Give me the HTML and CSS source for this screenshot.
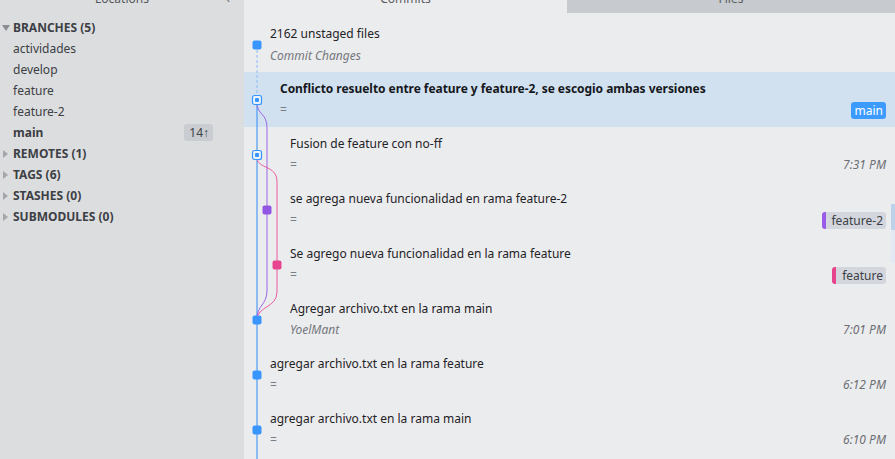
FILE: index.html
```html
<!DOCTYPE html>
<html>
<head>
<meta charset="utf-8">
<link rel="stylesheet" href="styles.css">
</head>
<body>
<aside class="sidebar">
  <div class="side-header"><span class="side-title">Locations</span><span class="side-chevron">‹</span></div>
  <ul class="tree">
    <li class="section open"><span class="tri tri-down"></span>BRANCHES (5)</li>
    <li class="item">actividades</li>
    <li class="item">develop</li>
    <li class="item">feature</li>
    <li class="item">feature-2</li>
    <li class="item current"><span>main</span><span class="ahead">14↑</span></li>
    <li class="section"><span class="tri tri-right"></span>REMOTES (1)</li>
    <li class="section"><span class="tri tri-right"></span>TAGS (6)</li>
    <li class="section"><span class="tri tri-right"></span>STASHES (0)</li>
    <li class="section"><span class="tri tri-right"></span>SUBMODULES (0)</li>
  </ul>
</aside>
<main class="main">
  <div class="tabs">
    <div class="tab active"><span>Commits</span></div>
    <div class="tab"><span>Files</span></div>
  </div>
  <div class="list">
    <svg class="graph" width="60" height="459" viewBox="0 0 60 459">
      <line x1="13" y1="45" x2="13" y2="100" stroke="#8dbcf3" stroke-width="1" stroke-dasharray="3 2"/>
      <line x1="13" y1="100" x2="13" y2="459" stroke="#3d94f6" stroke-width="1.1"/>
      <path d="M13 102 C13 116 23 112 23 128 L23 290 C23 306 13 304 13 320" fill="none" stroke="#9b66e6" stroke-width="1"/>
      <path d="M13 157 C13 170 33 164 33 182 L33 292 C33 308 13 306 13 320" fill="none" stroke="#ec5d9f" stroke-width="1"/>
      <rect x="8.5" y="40.5" width="9" height="9" rx="2" fill="#3a96ff"/>
      <rect x="8.5" y="95.5" width="9" height="9" rx="2" fill="#eaf2fb" stroke="#3a96ff" stroke-width="1.2"/>
      <rect x="11" y="98" width="4" height="4" rx="1" fill="#3a96ff"/>
      <rect x="8.5" y="150.5" width="9" height="9" rx="2" fill="#eaf2fb" stroke="#3a96ff" stroke-width="1.2"/>
      <rect x="11" y="153" width="4" height="4" rx="1" fill="#3a96ff"/>
      <rect x="18.5" y="205.5" width="9" height="9" rx="2" fill="#9157e4"/>
      <rect x="28.5" y="260.5" width="9" height="9" rx="2" fill="#e84590"/>
      <rect x="8.5" y="315.5" width="9" height="9" rx="2" fill="#3a96ff"/>
      <rect x="8.5" y="370.5" width="9" height="9" rx="2" fill="#3a96ff"/>
      <rect x="8.5" y="425.5" width="9" height="9" rx="2" fill="#3a96ff"/>
    </svg>
    <div class="row g1 first">
      <div class="title">2162 unstaged files</div>
      <div class="sub"><span class="meta">Commit Changes</span></div>
    </div>
    <div class="row g2 selected">
      <div class="title bold">Conflicto resuelto entre feature y feature-2, se escogio ambas versiones</div>
      <div class="sub"><span class="eq">=</span><span class="badge badge-main">main</span></div>
    </div>
    <div class="row g3">
      <div class="title">Fusion de feature con no-ff</div>
      <div class="sub"><span class="eq">=</span><span class="time">7:31 PM</span></div>
    </div>
    <div class="row g3">
      <div class="title">se agrega nueva funcionalidad en rama feature-2</div>
      <div class="sub"><span class="eq">=</span><span class="badge badge-purple">feature-2</span></div>
    </div>
    <div class="row g3">
      <div class="title">Se agrego nueva funcionalidad en la rama feature</div>
      <div class="sub"><span class="eq">=</span><span class="badge badge-pink">feature</span></div>
    </div>
    <div class="row g3">
      <div class="title">Agregar archivo.txt en la rama main</div>
      <div class="sub"><span class="meta">YoelMant</span><span class="time">7:01 PM</span></div>
    </div>
    <div class="row g1">
      <div class="title">agregar archivo.txt en la rama feature</div>
      <div class="sub"><span class="eq">=</span><span class="time">6:12 PM</span></div>
    </div>
    <div class="row g1">
      <div class="title">agregar archivo.txt en la rama main</div>
      <div class="sub"><span class="eq">=</span><span class="time">6:10 PM</span></div>
    </div>
    <div class="scroll-mark"><div class="mark-a"></div><div class="mark-b"></div></div>
  </div>
</main>
</body>
</html>
```

FILE: styles.css
```css
* { box-sizing: border-box; }
html, body { margin: 0; padding: 0; }
body {
  width: 895px;
  height: 459px;
  overflow: hidden;
  display: flex;
  font-family: "Noto Sans", "Open Sans", sans-serif;
  font-size: 12px;
  background: #ebecee;
}
.sidebar {
  width: 244px;
  flex: 0 0 244px;
  height: 459px;
  background: #dcdddf;
  color: #3b3e43;
}
.side-header {
  height: 20px;
  margin-top: -11px;
  line-height: 20px;
  display: flex;
  justify-content: center;
  position: relative;
  color: #55585d;
}
.side-chevron {
  position: absolute;
  right: 14px;
  top: 0;
  color: #6a6d72;
}
.tree {
  list-style: none;
  margin: 8px 0 0 0;
  padding: 0;
}
.tree li {
  height: 21px;
  line-height: 21px;
  padding-left: 13px;
  position: relative;
}
.section {
  font-weight: bold;
  color: #3c3f45;
}
.tri {
  position: absolute;
  width: 0;
  height: 0;
}
.tri-down {
  left: 2px;
  top: 8px;
  border-left: 4px solid transparent;
  border-right: 4px solid transparent;
  border-top: 6px solid #8a8d92;
}
.tri-right {
  left: 3px;
  top: 7px;
  border-top: 4px solid transparent;
  border-bottom: 4px solid transparent;
  border-left: 5px solid #a3a6ab;
}
.item.current {
  font-weight: bold;
  display: flex;
  justify-content: space-between;
  align-items: center;
  padding-right: 31px;
}
.ahead {
  font-weight: normal;
  background: #c9ccd0;
  border-radius: 3px;
  height: 17px;
  line-height: 17px;
  padding: 0 4px 0 5px;
  color: #3f4247;
  font-size: 12px;
}
.main {
  flex: 1;
  display: flex;
  flex-direction: column;
  height: 459px;
  position: relative;
}
.tabs {
  display: flex;
  height: 13px;
  color: #5a5d62;
}
.tab {
  display: flex;
  justify-content: center;
  align-items: flex-end;
  height: 13px;
}
.tab span {
  line-height: 14px;
  margin-bottom: 7px;
}
.tab.active { width: 323px; background: #ebecee; }
.tab:not(.active) { flex: 1; background: #c7cbcf; }
.list {
  position: relative;
  padding-top: 4px;
  flex: 1;
}
.graph {
  position: absolute;
  left: 0;
  top: -13px;
  z-index: 2;
}
.row {
  height: 55px;
  padding-top: 7px;
  padding-right: 9px;
  color: #1f2226;
}
.row.g1 { padding-left: 26px; }
.row.g2 { padding-left: 36px; }
.row.g3 { padding-left: 46px; }
.row.selected { background: #d2e1f0; }
.title {
  height: 20px;
  line-height: 20px;
  white-space: nowrap;
}
.title.bold { font-weight: bold; color: #15181c; letter-spacing: -0.05px; }
.sub {
  height: 20px;
  line-height: 20px;
  margin-top: 1px;
  display: flex;
  justify-content: space-between;
  align-items: center;
}
.row.first .sub { margin-top: 2px; }
.meta {
  font-style: italic;
  color: #74777c;
}
.eq { color: #7a7d82; }
.time {
  font-style: italic;
  color: #6b6e73;
}
.badge {
  height: 17px;
  line-height: 17px;
  border-radius: 3px;
  padding: 0 3px 0 4px;
  color: #3d4046;
  background: #d3d7dd;
}
.badge-main {
  background: #3d9bff;
  color: #ffffff;
}
.badge-purple { border-left: 4px solid #9a5ce8; padding-left: 5px; }
.badge-pink { border-left: 4px solid #e8448e; padding-left: 6px; }
.scroll-mark {
  position: absolute;
  right: 0;
  top: 191px;
  width: 4px;
}
.mark-a { height: 26px; background: #bcd2ea; }
.mark-b { height: 33px; background: #e2e9f2; }
```
